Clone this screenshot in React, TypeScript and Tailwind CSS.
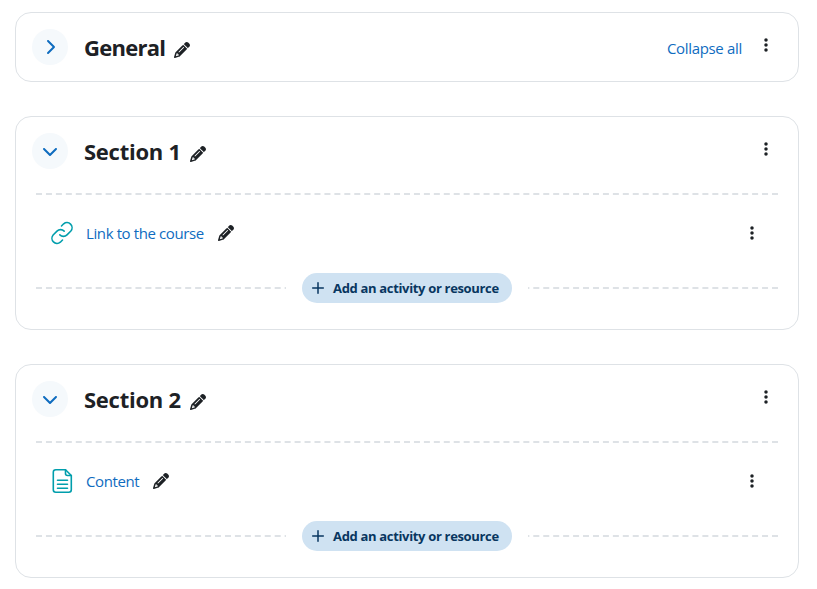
import type { ReactNode } from "react";
import {
  FaChevronDown,
  FaChevronRight,
  FaEllipsisVertical,
  FaPencil,
} from "react-icons/fa6";

type Activity = {
  name: string;
  icon: ReactNode;
  width: string;
};

const LinkIcon = () => (
  <svg
    className="w-6 h-6"
    viewBox="0.5 0.5 23 23"
    fill="none"
    stroke="#009eac"
    strokeWidth="1.5"
    strokeLinecap="round"
    strokeLinejoin="round"
  >
    <path d="M11.5 5.3l2.1-2.1a4.9 4.9 0 0 1 6.9 6.9l-3.7 3.7a4.9 4.9 0 0 1-6.9 0" />
    <path d="M12.5 18.7l-2.1 2.1a4.9 4.9 0 0 1-6.9-6.9l3.7-3.7a4.9 4.9 0 0 1 6.9 0" />
  </svg>
);

const PageIcon = () => (
  <svg
    className="w-6 h-6"
    viewBox="0 0 24 24"
    fill="none"
    stroke="#009eac"
    strokeWidth="1.6"
    strokeLinecap="round"
    strokeLinejoin="round"
  >
    <path d="M15.5.8H5.8a2.5 2.5 0 0 0-2.5 2.5v17.4a2.5 2.5 0 0 0 2.5 2.5h13a2.5 2.5 0 0 0 2.5-2.5V6.5z" />
    <path d="M15.5.8v3.7a2 2 0 0 0 2 2h3.8M7.5 11.3h10M7.5 15.3h10M7.5 19.3h10" />
  </svg>
);

const PlusIcon = () => (
  <svg
    className="mr-2 h-3.5 w-3.5"
    viewBox="0 0 14 14"
    stroke="currentColor"
    strokeWidth="1.5"
    strokeLinecap="round"
  >
    <path d="M7 1.7v10.6M1.7 7h10.6" />
  </svg>
);

const SectionHeader = ({
  title,
  width,
  open,
  children,
}: {
  title: string;
  width: string;
  open: boolean;
  children?: ReactNode;
}) => (
  <div className="flex h-[68px] items-center pl-4 pr-6">
    <button className="grid h-9 w-9 place-items-center rounded-full bg-[#f5f9fc] text-[#0f6cbf]">
      {open ? (
        <FaChevronDown className="h-4 w-4" />
      ) : (
        <FaChevronRight className="h-4 w-4" />
      )}
    </button>
    <h3
      className={`ml-4 whitespace-nowrap text-[22px] leading-7 font-bold text-[#1d2125] ${width}`}
    >
      {title}
    </h3>
    <FaPencil className="ml-[9px] mt-1.5 h-4 w-4 text-[#1d2125]" />
    <div className="ml-auto flex items-center">
      {children}
      <FaEllipsisVertical className="mb-1 h-4 w-4 text-[#1d2125]" />
    </div>
  </div>
);

const AddActivity = () => (
  <div className="mx-5 mt-7 grid h-[30px] items-center">
    <div className="col-start-1 row-start-1 border-t-2 border-dashed border-[#dee2e6]" />
    <div className="col-start-1 row-start-1 z-10 justify-self-center bg-white px-4">
      <button className="flex h-[30px] w-[210px] items-center rounded-full bg-[#cfe2f2] pl-[9px] text-[13px] font-bold tracking-[-0.33px] whitespace-nowrap text-[#083660]">
        <PlusIcon />
        <span className="pt-px">Add an activity or resource</span>
      </button>
    </div>
  </div>
);

const Section = ({ title, activity }: { title: string; activity: Activity }) => (
  <section className="h-[214px] rounded-2xl border border-[#dee2e6]">
    <SectionHeader title={title} width="w-[97px] tracking-[-0.25px]" open />
    <div className="mx-5 mt-2 border-t-2 border-dashed border-[#dee2e6]" />
    <div className="mt-[26px] flex h-6 items-center pl-[34px] pr-[38px]">
      {activity.icon}
      <a
        className={`ml-3 whitespace-nowrap text-[15px] tracking-[-0.39px] text-[#0f6cbf] ${activity.width}`}
      >
        {activity.name}
      </a>
      <FaPencil className="ml-3.5 h-4 w-4 text-[#1d2125]" />
      <FaEllipsisVertical className="ml-auto h-4 w-4 text-[#1d2125]" />
    </div>
    <AddActivity />
  </section>
);

const App = () => {
  return (
    <main className="h-[589px] bg-white pt-3 pr-[18px] pl-[15px] font-['Open_Sans','Noto_Sans',sans-serif]">
      <div className="flex flex-col gap-[34px]">
        <section className="rounded-2xl border border-[#dee2e6]">
          <SectionHeader
            title="General"
            width="w-[81px] tracking-[-0.75px]"
            open={false}
          >
            <a className="mr-4 mt-0.5 w-[75px] text-[15px] tracking-[-0.34px] whitespace-nowrap text-[#0f6cbf]">
              Collapse all
            </a>
          </SectionHeader>
        </section>
        <Section
          title="Section 1"
          activity={{
            name: "Link to the course",
            icon: <LinkIcon />,
            width: "w-[118px]",
          }}
        />
        <Section
          title="Section 2"
          activity={{ name: "Content", icon: <PageIcon />, width: "w-[53px]" }}
        />
      </div>
    </main>
  );
};

export default App;
